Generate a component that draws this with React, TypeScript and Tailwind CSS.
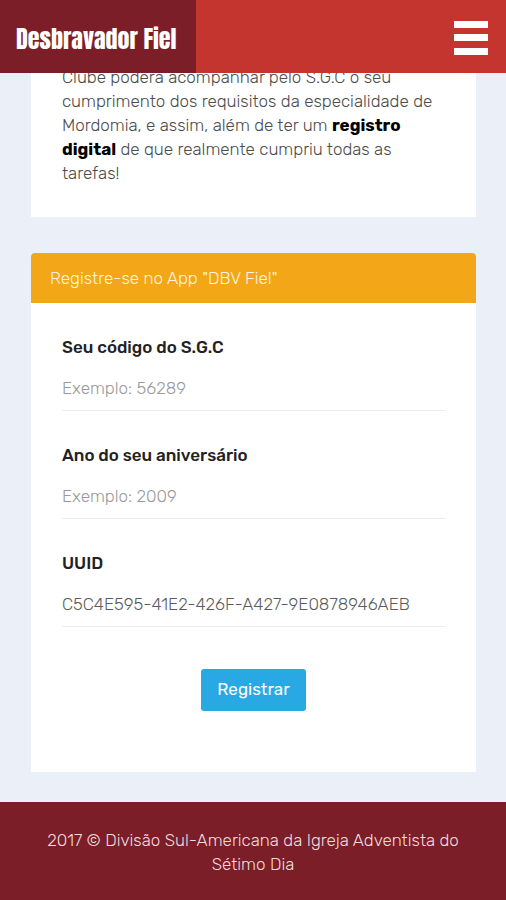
import React, { useState } from "react";

const Header = () => {
  return (
    <header className="sticky top-0 z-10 flex h-[73px] items-stretch justify-between bg-[#c3352e]">
      <h1 className="flex w-[196px] items-center bg-[#7b1e28] pl-4 pt-1 font-['Anton','Oswald','Roboto_Condensed',sans-serif] text-2xl font-normal whitespace-nowrap text-white">
        Desbravador Fiel
      </h1>
      <button type="button" aria-label="Menu" className="flex cursor-pointer items-center pr-[18px] pt-[3px]">
        <svg width="34" height="34" viewBox="0 0 34 34" fill="#fff">
          <rect width="34" height="7" />
          <rect y="13" width="34" height="7" />
          <rect y="27" width="34" height="7" />
        </svg>
      </button>
    </header>
  );
};

const Field = (props: {
  id: string;
  label: string;
  placeholder?: string;
  value: string;
  onChange: (value: string) => void;
}) => {
  const { id, label, placeholder, value, onChange } = props;

  return (
    <div className="mb-8 flex flex-col">
      <label htmlFor={id} className="text-[17px] leading-6 font-medium text-[#222]">
        {label}
      </label>
      <input
        id={id}
        type="text"
        className="mt-2 h-11 w-full border-b border-[#ececec] bg-transparent pb-[2px] text-[17px] font-light text-[#5c5c5c] outline-none placeholder:text-[#999]"
        placeholder={placeholder}
        value={value}
        onChange={(e) => onChange(e.target.value)}
      />
    </div>
  );
};

const RegisterCard = () => {
  const [code, setCode] = useState("");
  const [year, setYear] = useState("");
  const [uuid, setUuid] = useState("C5C4E595-41E2-426F-A427-9E0878946AEB");

  return (
    <section className="mt-9 bg-white rounded-t">
      <h2 className="rounded-t bg-[#f3a618] px-[19px] py-[13px] text-[17px] leading-6 font-light text-[#fff6df]">
        Registre-se no App "DBV Fiel"
      </h2>
      <form className="px-[31px] pt-8 pb-[61px]" onSubmit={(e) => e.preventDefault()}>
        <Field id="code" label="Seu código do S.G.C" placeholder="Exemplo: 56289" value={code} onChange={setCode} />
        <Field id="year" label="Ano do seu aniversário" placeholder="Exemplo: 2009" value={year} onChange={setYear} />
        <Field id="uuid" label="UUID" value={uuid} onChange={setUuid} />
        <div className="flex justify-center pt-[10px]">
          <button type="submit" className="h-[42px] cursor-pointer rounded-[3px] bg-[#29a9e4] px-4 text-[17px] text-white">
            Registrar
          </button>
        </div>
      </form>
    </section>
  );
};

export default function App() {
  return (
    <div className="flex min-h-screen flex-col bg-[#ebeff7] font-['Rubik','Roboto',sans-serif]">
      <Header />
      <main className="-mt-2 pr-[30px] pb-[30px] pl-[31px]">
        <section className="bg-white px-[31px] pb-8">
          <p className="text-[17px] leading-6 font-light text-[#4c4c4c]">
            Clube poderá acompanhar pelo S.G.C o seu cumprimento dos requisitos da especialidade de Mordomia, e
            assim, além de ter um <strong className="font-bold text-black">registro digital</strong> de que
            realmente cumpriu todas as tarefas!
          </p>
        </section>
        <RegisterCard />
      </main>
      <footer className="grow bg-[#7b1e28] px-10 py-[26px] text-center text-[17px] leading-6 font-light text-[#f0dcde]">
        2017 © Divisão Sul-Americana da Igreja Adventista do Sétimo Dia
      </footer>
    </div>
  );
}
